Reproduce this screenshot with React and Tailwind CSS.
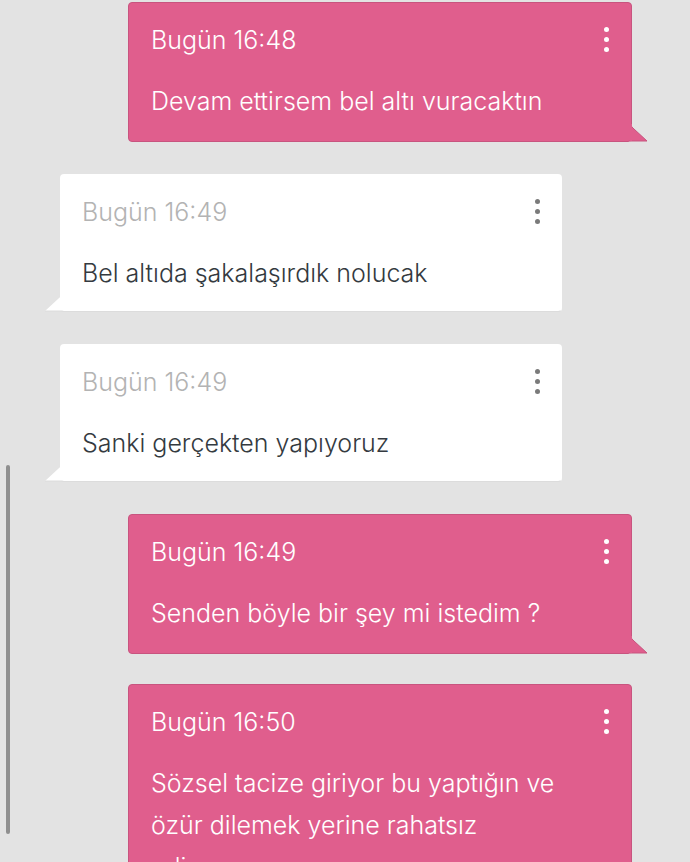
import React from 'react'

const messages = [
  { id: 1, mine: true, time: 'Bugün 16:48', text: 'Devam ettirsem bel altı vuracaktın' },
  { id: 2, mine: false, time: 'Bugün 16:49', text: 'Bel altıda şakalaşırdık nolucak' },
  { id: 3, mine: false, time: 'Bugün 16:49', text: 'Sanki gerçekten yapıyoruz' },
  { id: 4, mine: true, time: 'Bugün 16:49', text: 'Senden böyle bir şey mi istedim ?' },
  { id: 5, mine: true, time: 'Bugün 16:50', text: 'Sözsel tacize giriyor bu yaptığın ve özür dilemek yerine rahatsız ediyorsun', last: true },
]

function Dots({ mine }) {
  const c = mine ? 'bg-white' : 'bg-[#7a7a7a]'
  return (
    <div className="flex flex-col gap-[5px] pt-[3px]">
      <span className={`block w-[5px] h-[5px] rounded-full ${c}`}></span>
      <span className={`block w-[5px] h-[5px] rounded-full ${c}`}></span>
      <span className={`block w-[5px] h-[5px] rounded-full ${c}`}></span>
    </div>
  )
}

function Bubble({ msg }) {
  const { mine } = msg
  return (
    <div className={`flex ${mine ? 'pl-[128px] pr-[58px]' : 'pl-[60px] pr-[128px]'} ${msg.last ? '-mt-[2px]' : ''}`}>
      <div
        className={`relative flex-1 rounded-[4px] pt-[21px] ${
          mine
            ? 'bg-[#e05e8d] border border-[#c8547f] pl-[22px] pr-[22px] pb-[19px] text-white'
            : 'bg-white border border-[#dcdcdc] border-t-transparent border-x-transparent pl-[21px] pr-[21px] pb-[17px]'
        }`}
      >
        <div className="flex items-start justify-between">
          <span className={`text-[25px] leading-[32px] font-light ${mine ? 'text-white' : 'text-[#b3b3b3]'}`}>{msg.time}</span>
          <Dots mine={mine} />
        </div>
        <p className={`mt-[24px] text-[25px] leading-[42px] font-light pr-[30px] ${mine ? 'text-white' : 'text-[#343a40]'}`}>
          {msg.text}
        </p>
        {mine ? (
          <svg className="absolute right-[-17px] bottom-[-1px]" width="18" height="18" viewBox="0 0 18 18">
            <path d="M1 0 Q1 3 4 5 L17 17 L0 17 Z" fill="#e05e8d" />
            <path d="M1 0 Q1 3 4 5 L17 17 L0 17" fill="none" stroke="#c8547f" strokeWidth="1" />
            <rect x="0" y="0" width="2" height="17" fill="#e05e8d" />
          </svg>
        ) : (
          <svg className="absolute left-[-17px] bottom-[-1px]" width="18" height="18" viewBox="0 0 18 18">
            <path d="M17 0 Q17 3 14 5 L1 17 L18 17 Z" fill="#ffffff" />
            <path d="M1 17 L18 17" stroke="#dcdcdc" strokeWidth="1" />
          </svg>
        )}
      </div>
    </div>
  )
}

export default function App() {
  return (
    <div
      className="relative h-[862px] w-[690px] overflow-hidden bg-[#e3e3e3]"
      style={{ fontFamily: 'Inter, "Liberation Sans", Arial, sans-serif' }}
    >
      <div className="flex flex-col gap-[32px] pt-[2px]">
        {messages.map(m => (
          <Bubble key={m.id} msg={m} />
        ))}
      </div>
      <div className="absolute left-[6px] top-[465px] w-[4px] h-[369px] rounded-full bg-[#8f8f8f]"></div>
    </div>
  )
}
